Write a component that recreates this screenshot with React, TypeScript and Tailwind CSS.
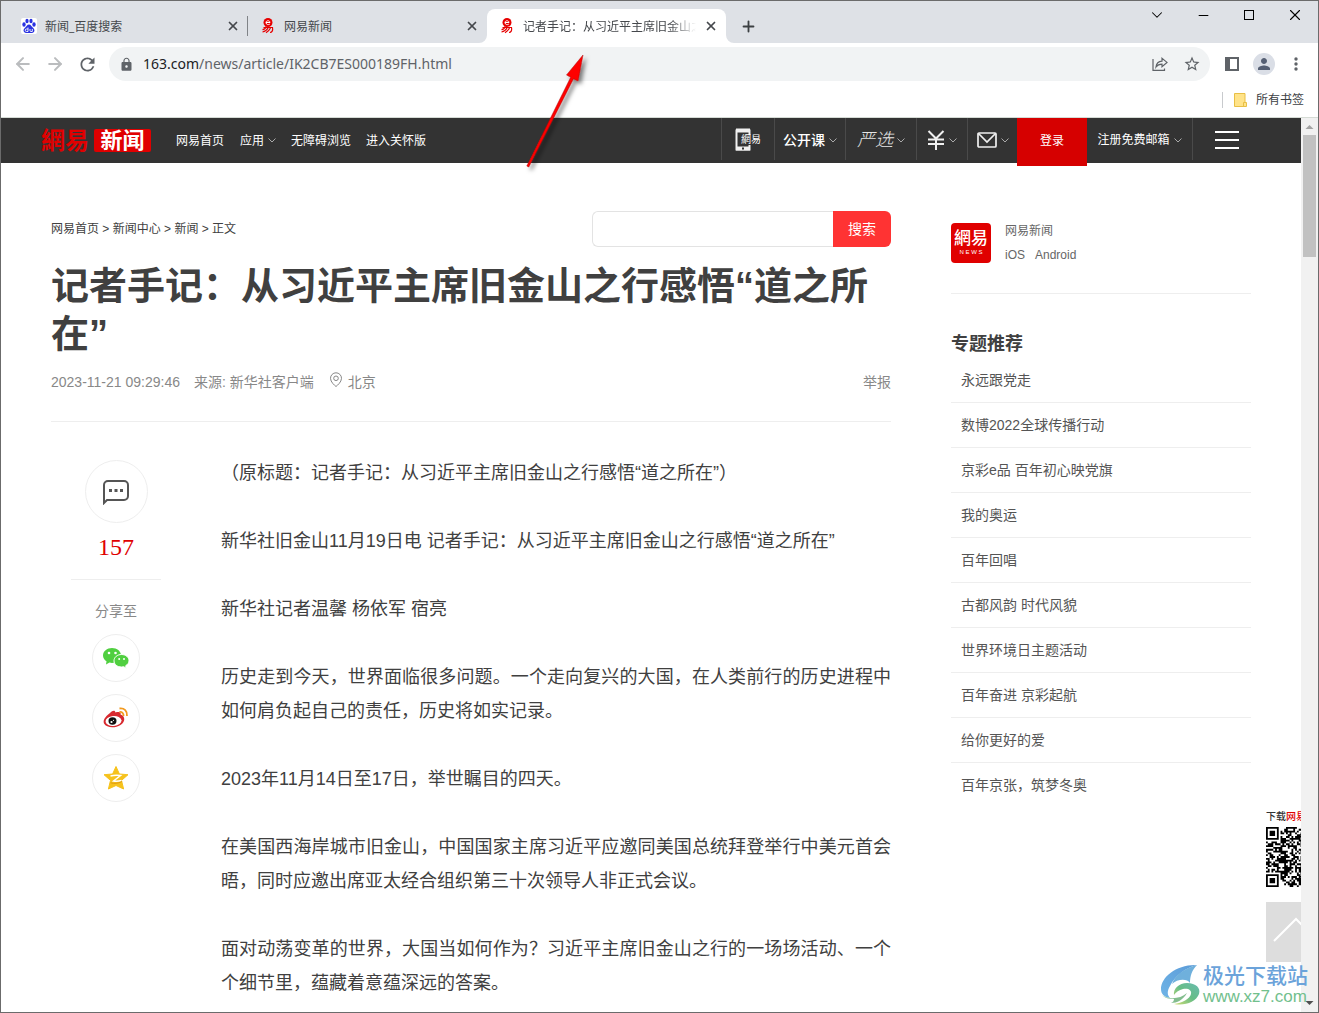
import type { ReactNode } from "react";
import {
  ArrowLeft,
  ArrowRight,
  ChevronDown,
  Minus,
  Plus,
  X,
} from "lucide-react";
import { MdLock, MdPerson, MdRefresh, MdStarBorder } from "react-icons/md";

const topics = [
  "永远跟党走",
  "数博2022全球传播行动",
  "京彩e品 百年初心映党旗",
  "我的奥运",
  "百年回唱",
  "古都风韵 时代风貌",
  "世界环境日主题活动",
  "百年奋进 京彩起航",
  "给你更好的爱",
  "百年京张，筑梦冬奥",
];

const paragraphs = [
  "（原标题：记者手记：从习近平主席旧金山之行感悟“道之所在”）",
  "新华社旧金山11月19日电 记者手记：从习近平主席旧金山之行感悟“道之所在”",
  "新华社记者温馨 杨依军 宿亮",
  "历史走到今天，世界面临很多问题。一个走向复兴的大国，在人类前行的历史进程中如何肩负起自己的责任，历史将如实记录。",
  "2023年11月14日至17日，举世瞩目的四天。",
  "在美国西海岸城市旧金山，中国国家主席习近平应邀同美国总统拜登举行中美元首会晤，同时应邀出席亚太经合组织第三十次领导人非正式会议。",
  "面对动荡变革的世界，大国当如何作为？习近平主席旧金山之行的一场场活动、一个个细节里，蕴藏着意蕴深远的答案。",
];

const BaiduIcon = () => (
  <svg width="16" height="16" viewBox="0 0 16 16" fill="#2932e1" className="shrink-0">
    <rect width="16" height="16" rx="2" fill="#fff" />
    <ellipse cx="3" cy="6.500" rx="1.700" ry="2.200" />
    <ellipse cx="6" cy="3" rx="1.600" ry="2.200" />
    <ellipse cx="10" cy="3" rx="1.600" ry="2.200" />
    <ellipse cx="13" cy="6.500" rx="1.700" ry="2.200" />
    <path d="M8 6.500c2 0 2.500 2 4 3.200 1.500 1.300 1.700 2.600 1.200 3.800-.8 1.800-2.700 1.500-5.200 1.500s-4.400.3-5.200-1.500c-.5-1.200-.3-2.500 1.200-3.800C5.500 8.500 6 6.500 8 6.500z" />
    <path d="M7 9.500v4H5.500a1.200 1.200 0 0 1 0-2.500H7M9 11v1.500c0 .7.300 1 1 1h1.300V11" fill="none" stroke="#fff" strokeWidth=".9" />
  </svg>
);

const NeteaseIcon = () => (
  <svg width="16" height="16" viewBox="0 0 16 16" fill="none" stroke="#e60000" className="shrink-0">
    <circle cx="8" cy="4.5" r="4.5" fill="#e60000" stroke="none" />
    <path d="M6 4.500h4c0-2.300-4-2.300-4 0 0 2.400 2.500 2.500 3.800 1.600" stroke="#fff" />
    <path d="M3.500 9.500h9c.6 3-.5 5-2.500 5M6 8.500c-.5 2-2 3-3.500 3.200M8 10c-1 2-3 3.500-5.500 4M10.500 10c-1 2-2.500 3.500-4.500 4.800" strokeWidth="1.2" />
  </svg>
);

type TabProps = { icon: ReactNode; title: string; active?: boolean; divider?: boolean };

const Tab = ({ icon, title, active, divider }: TabProps) => (
  <div
    className={`relative flex h-[34px] w-[239px] items-center pr-2 pl-3 ${
      active ? "rounded-t-lg bg-white" : ""
    }`}
  >
    {icon}
    <span
      className={`ml-2 flex-1 overflow-hidden pt-0.5 text-xs whitespace-nowrap text-[#45484c] ${
        active ? "[mask-image:linear-gradient(to_right,black_85%,transparent)]" : ""
      }`}
    >
      {title}
    </span>
    <button aria-label={`关闭 ${title}`} className="ml-2 text-[#45484c]">
      <X size={14} strokeWidth={3} />
    </button>
    {divider && <span className="absolute top-[7px] right-0 h-5 w-px bg-[#808387]" />}
    {active && (
      <>
        <svg width="8" height="8" className="absolute bottom-0 -left-2" fill="#fff">
          <path d="M8 0v8H0a8 8 0 0 0 8-8z" />
        </svg>
        <svg width="8" height="8" className="absolute -right-2 bottom-0" fill="#fff">
          <path d="M0 0v8h8a8 8 0 0 1-8-8z" />
        </svg>
      </>
    )}
  </div>
);

const TabStrip = () => (
  <div className="flex h-[42px] shrink-0 bg-[#dee1e6] pl-2">
    <div className="flex items-end">
      <Tab icon={<BaiduIcon />} title="新闻_百度搜索" divider />
      <Tab icon={<NeteaseIcon />} title="网易新闻" />
      <Tab icon={<NeteaseIcon />} title="记者手记：从习近平主席旧金山之" active />
      <button aria-label="新标签页" className="ml-3 flex h-[34px] w-5 items-center justify-center text-[#3c4043]">
        <Plus size={17} strokeWidth={2.6} />
      </button>
    </div>
    <div className="ml-auto flex h-7 text-black">
      <button aria-label="搜索标签页" className="flex w-[46px] items-center justify-center">
        <ChevronDown size={18} strokeWidth={1.4} />
      </button>
      <button aria-label="最小化" className="flex w-[46px] items-center justify-center">
        <Minus size={15} strokeWidth={1.8} />
      </button>
      <button aria-label="最大化" className="flex w-[46px] items-center justify-center">
        <svg width="10" height="10" fill="none" stroke="#000">
          <rect x=".5" y=".5" width="9" height="9" />
        </svg>
      </button>
      <button aria-label="关闭" className="flex w-[46px] items-center justify-center">
        <X size={18} strokeWidth={1.5} />
      </button>
    </div>
  </div>
);

const Toolbar = () => (
  <div className="flex shrink-0 items-center px-[6px] pt-1 pb-0.5 text-[#5f6368]">
    <button aria-label="后退" className="flex w-8 justify-center text-[#babcbe]">
      <ArrowLeft size={20} strokeWidth={2.4} />
    </button>
    <button aria-label="前进" className="flex w-8 justify-center text-[#babcbe]">
      <ArrowRight size={20} strokeWidth={2.4} />
    </button>
    <button aria-label="重新加载" className="flex w-8 justify-center">
      <MdRefresh size={21} />
    </button>
    <div className="mx-[6px] flex h-[34px] flex-1 items-center rounded-full bg-[#f1f3f4] pr-[9px] pl-[10px]">
      <MdLock size={15} />
      <p className="ml-[9px] flex-1 font-['Noto_Sans',sans-serif] text-sm">
        <span className="text-[#202124]">163.com</span>/news/article/IK2CB7ES000189FH.html
      </p>
      <button aria-label="分享" className="mr-[15px]">
        <svg width="16" height="16" viewBox="0 0 16 16" fill="none" stroke="#5f6368" strokeWidth="1.2">
          <path d="M1 3v11.400h11.500v-2" />
          <path d="M4 11c.4-4 2.600-5.700 6-5.900V2.200l5 4.200-5 4.200V8.200c-2.600 0-4.500.7-6 2.800z" />
        </svg>
      </button>
      <button aria-label="为此标签页添加书签">
        <MdStarBorder size={18} />
      </button>
    </div>
    <button aria-label="侧边栏" className="flex w-8 justify-center">
      <svg width="14" height="14" fill="none" stroke="#5f6368" strokeWidth="2">
        <rect x="1" y="1" width="12" height="12" />
        <path d="M3 1v12" strokeWidth="4" />
      </svg>
    </button>
    <button aria-label="个人资料" className="flex w-8 justify-center text-[#566074]">
      <span className="flex size-[22px] items-center justify-center rounded-full bg-[#dadee6]">
        <MdPerson size={18} />
      </span>
    </button>
    <button aria-label="更多" className="flex w-8 justify-center">
      <svg width="4" height="14" fill="#5f6368">
        <circle cx="2" cy="2" r="1.700" />
        <circle cx="2" cy="7" r="1.700" />
        <circle cx="2" cy="12" r="1.700" />
      </svg>
    </button>
  </div>
);

const BookmarksBar = () => (
  <div className="flex h-[35px] shrink-0 items-center justify-end border-b border-[#d5dbd5] pr-[14px]">
    <span className="h-4 w-px bg-[#c8cacd]" />
    <button className="ml-[11px] flex items-center gap-[9px] text-xs text-[#3c4043]">
      <svg width="13" height="14" fill="#ffe389" stroke="#e8bf45">
        <path d="M.5.500h10.500v9h1.500v4H.5z" />
        <path d="M9.500 13.500v-4H11" />
      </svg>
      所有书签
    </button>
  </div>
);

const Caret = () => (
  <svg width="8" height="5" fill="none" stroke="#aaa" className="shrink-0">
    <path d="M.5.500l3.500 3.500L7.500.500" />
  </svg>
);

const cell = "flex h-[42px] items-center justify-center gap-1 border-l border-[#4a4a4a] pt-0.5";

const SiteHeader = () => (
  <header className="h-[45px] bg-[#333] text-white">
    <div className="mx-auto flex max-w-[1220px] items-start">
      <a href="#" className="flex h-[45px] items-center font-bold">
        <span className="w-[53px] text-2xl text-[#e00000]">網易</span>
        <span className="flex h-[23px] w-[57px] items-center justify-center rounded-xs bg-[#e00000] text-[22px]">
          新闻
        </span>
      </a>
      <nav className="ml-[25px] flex h-[45px] items-center text-xs">
        <a href="#">网易首页</a>
        <a href="#" className="ml-4 flex items-center gap-1">
          应用
          <Caret />
        </a>
        <a href="#" className="ml-[15px]">无障碍浏览</a>
        <a href="#" className="ml-[15px]">进入关怀版</a>
      </nav>
      <div className="ml-auto flex text-xs">
        <a href="#" className={`${cell} w-[53px]`}>
          <svg width="16" height="24" fill="none" stroke="#f0f0f0" className="shrink-0">
            <path d="M14.500 7V2.500h-13v19h13V17" strokeWidth="2" />
            <path d="M1 2.500h14M1 20.500h14" strokeWidth="4" />
            <path d="M7 20.500h2" stroke="#333" strokeWidth="2" />
          </svg>
          <span className="-ml-[14px] text-[10px]">網易</span>
        </a>
        <a href="#" className={`${cell} w-[71px] text-sm font-medium`}>
          公开课
          <Caret />
        </a>
        <a href="#" className={`${cell} w-[71px] text-lg font-light text-[#e5e5e5] italic`}>
          严选
          <Caret />
        </a>
        <a href="#" aria-label="支付" className={`${cell} w-[51px]`}>
          <svg width="18" height="20" fill="none" stroke="#f0f0f0" strokeWidth="2">
            <path d="M1.500 1L9 8.500 16.500 1M1 9.500h16M1 14h16M9 9v11" />
          </svg>
          <Caret />
        </a>
        <a href="#" aria-label="邮箱" className={`${cell} w-[50px]`}>
          <svg width="20" height="16" fill="none" stroke="#f0f0f0" strokeWidth="1.700">
            <rect x="1" y="1" width="18" height="14" rx="1" />
            <path d="M1.500 1.500L10 10l8.500-8.500" />
          </svg>
          <Caret />
        </a>
        <a href="#" className="flex h-12 w-[70px] items-center justify-center bg-[#d60000] pb-[3px]">
          登录
        </a>
        <a href="#" className="flex h-[42px] w-[105px] items-center justify-center gap-1 pt-0.5">
          注册免费邮箱
          <Caret />
        </a>
        <button aria-label="菜单" className={`${cell} w-[69px]`}>
          <svg width="24" height="18" stroke="#fff" strokeWidth="2">
            <path d="M0 1h24M0 9h24M0 17h24" />
          </svg>
        </button>
      </div>
    </div>
  </header>
);

const WechatIcon = () => (
  <svg width="26" height="22" viewBox="0 0 26 22" fill="#50cf40">
    <path d="M9 1C4 1 0 4.300 0 8.400c0 2.500 1.400 4.500 3.500 5.900L3 17.500l3.500-1.900c.9.200 1.700.3 2.500.3 5 0 9-3.300 9-7.500S14 1 9 1z" />
    <path d="M18.500 7.500c-4.200 0-7.500 2.700-7.500 6.300s3.300 6.200 7.500 6.200c.7 0 1.500-.1 2.200-.3l2.500 1.500-.5-2.500c2-1.100 3.300-2.900 3.300-4.900 0-3.600-3.300-6.300-7.500-6.300z" stroke="#fff" />
    <g fill="#fff">
      <circle cx="6" cy="6" r="1.300" />
      <circle cx="12.500" cy="6" r="1.300" />
      <circle cx="16.200" cy="12" r="1" />
      <circle cx="21" cy="12" r="1" />
    </g>
  </svg>
);

const WeiboIcon = () => (
  <svg width="26" height="22" viewBox="0 0 26 22">
    <path d="M7 6c2.500-2.500 5-3 5.500-.5 3-1 6-.5 5 2 5 1.500 5 7.500 0 10.500-5.500 3.500-14 3-16.500-1.500C-.5 13 3 9 7 6z" fill="#d8292f" />
    <ellipse cx="10.500" cy="14" rx="8" ry="5" fill="#fff" transform="rotate(-6 10.500 14)" />
    <ellipse cx="9.500" cy="14" rx="4" ry="3.700" fill="#111" />
    <circle cx="8.500" cy="15" r="1.100" fill="#fff" />
    <circle cx="10.500" cy="13.300" r=".6" fill="#fff" />
    <path d="M16.500 1.500c4.800-.7 8 2.500 7.500 7.500M16.500 5c2.500-.3 4.300 1.300 4 4" fill="none" stroke="#f29a1f" strokeWidth="1.800" />
  </svg>
);

const QzoneIcon = () => (
  <svg width="24" height="24" viewBox="0 0 24 24">
    <path d="M12 .5l3.400 7.500 8.600.7-6.500 5.700 2.100 8.600L12 19.500 4.400 23l2.100-8.600L0 8.700 8.600 8z" fill="#f6c21c" stroke="#f6c21c" strokeLinejoin="round" />
    <path d="M6.500 10c3.500-.8 6.500-.8 10-.4L9.500 15c2.500.5 4.500.5 8-.5" fill="none" stroke="#fff" strokeWidth="1.500" />
    <path d="M6.500 16.800c4 1 7 .8 11.500-1.300" fill="none" stroke="#df9a13" />
  </svg>
);

const shares = [
  { name: "微信", icon: <WechatIcon /> },
  { name: "微博", icon: <WeiboIcon /> },
  { name: "QQ空间", icon: <QzoneIcon /> },
];

const ShareColumn = () => (
  <div className="mt-[38px] mr-[60px] ml-5 flex w-[90px] shrink-0 flex-col items-center">
    <a
      href="#"
      aria-label="评论"
      className="flex size-[63px] items-center justify-center rounded-full border border-[#eee]"
    >
      <svg width="28" height="26" viewBox="0 0 28 26" fill="none" stroke="#555" strokeWidth="2">
        <path d="M2 24V6a4 4 0 0 1 4-4h16a4 4 0 0 1 4 4v11a4 4 0 0 1-4 4H5z" />
        <path d="M7 11.500h3M12.500 11.500h3M18 11.500h3" strokeWidth="3" />
      </svg>
    </a>
    <a
      href="#"
      className="flex h-[57px] w-full justify-center border-b border-[#eee] pt-2 font-['Liberation_Serif',serif] text-2xl text-[#e00000]"
    >
      157
    </a>
    <p className="mt-[21px] mb-[13px] text-sm text-[#888]">分享至</p>
    <div className="flex flex-col gap-3">
      {shares.map((share) => (
        <a
          key={share.name}
          href="#"
          aria-label={share.name}
          className="flex size-12 items-center justify-center rounded-full border border-[#eee]"
        >
          {share.icon}
        </a>
      ))}
    </div>
  </div>
);

const Article = () => (
  <main className="max-w-[840px] flex-1 pt-12 text-[#404040]">
    <div className="flex h-9 items-center justify-between">
      <nav className="text-xs">
        <a href="#">网易首页</a> &gt; <a href="#">新闻中心</a> &gt; <a href="#">新闻</a> &gt; 正文
      </nav>
      <form className="flex h-9 w-[299px]">
        <input
          type="text"
          aria-label="搜索"
          className="min-w-0 flex-1 rounded-l-md border border-r-0 border-[#e3e3e3] px-3 text-sm outline-none"
        />
        <button type="button" className="w-[58px] rounded-r-md bg-[#ff3333] text-sm text-white">
          搜索
        </button>
      </form>
    </div>
    <h1 className="mt-[15px] text-[38px] leading-[48px] font-bold">
      记者手记：从习近平主席旧金山之行感悟“道之所在”
    </h1>
    <div className="mt-[14px] flex items-center border-b border-[#eee] pb-[29px] text-sm text-[#888]">
      <span>2023-11-21 09:29:46</span>
      <span className="ml-[14px]">来源: 新华社客户端</span>
      <svg width="14" height="16" fill="none" stroke="#888" className="mr-[5px] mb-1 ml-[15px]">
        <path d="M7 14.500c-1.500-1.200-5.500-4.500-5.500-8.200a5.500 5.500 0 0 1 11 0c0 3.700-4 7-5.500 8.200z" />
        <circle cx="7" cy="6.300" r="2.300" />
      </svg>
      <span>北京</span>
      <a href="#" className="ml-auto">举报</a>
    </div>
    <div className="flex">
      <ShareColumn />
      <div className="mt-[34px] flex flex-1 flex-col gap-[34px] text-justify text-lg leading-[34px]">
        {paragraphs.map((text) => (
          <p key={text}>{text}</p>
        ))}
      </div>
    </div>
  </main>
);

const Sidebar = () => (
  <aside className="w-[300px] shrink-0 pt-[60px]">
    <div className="flex gap-[14px] border-b border-[#eee] pb-[30px] text-xs text-[#666]">
      <div className="flex size-10 flex-col items-center justify-center rounded-sm bg-[#e00000] text-white">
        <span className="text-[17px] leading-[18px] font-medium">網易</span>
        <span className="text-[6px] leading-[8px]">N E W S</span>
      </div>
      <div className="-my-1 leading-6">
        <p>网易新闻</p>
        <a href="#">iOS</a>
        <a href="#" className="ml-[10px]">Android</a>
      </div>
    </div>
    <h2 className="mt-[38px] mb-0.5 text-lg leading-6 font-bold text-[#404040]">专题推荐</h2>
    <ul className="text-sm text-[#555]">
      {topics.map((topic) => (
        <li
          key={topic}
          className="flex h-[45px] items-center border-b border-[#eee] px-[10px] last:border-transparent"
        >
          <a href="#">{topic}</a>
        </li>
      ))}
    </ul>
  </aside>
);

const QR_SIZE = 33;

const isFinder = (x: number, y: number) => {
  const near = (a: number) => (a < 8 ? a : a > QR_SIZE - 9 ? QR_SIZE - 1 - a : -1);
  const fx = near(x);
  const fy = near(y);
  if (fx < 0 || fy < 0 || (x > 24 && y > 24)) return null;
  const ring = Math.max(Math.abs(fx - 3), Math.abs(fy - 3));
  return ring !== 2 && ring < 4;
};

const QrCode = () => {
  let d = "";
  for (let y = 0; y < QR_SIZE; y++) {
    for (let x = 0; x < QR_SIZE; x++) {
      const finder = isFinder(x, y);
      const data = ((x * 7 + y * 13 + ((x * y * 5) ^ (x * 3 + y * 11))) * 2654435) % 97 < 54;
      if (finder ?? data) d += `M${x} ${y}h1v1h-1z`;
    }
  }
  return (
    <svg width="60" height="60" viewBox={`0 0 ${QR_SIZE} ${QR_SIZE}`}>
      <path d={d} />
    </svg>
  );
};

const FloatingTools = () => (
  <div className="absolute -right-[25px] bottom-[50px] w-[60px]">
    <p className="mb-1 text-[10px] leading-3 font-medium whitespace-nowrap text-[#333]">
      下载<span className="text-[#e00000]">网易新闻</span>
    </p>
    <QrCode />
    <button aria-label="返回顶部" className="mt-[15px] block size-[60px] bg-[#ddd]">
      <svg width="60" height="60" fill="none" stroke="#fff" strokeWidth="2">
        <path d="M8 39l22-22 22 22" />
      </svg>
    </button>
  </div>
);

const Scrollbar = () => (
  <div className="flex w-[17px] shrink-0 flex-col items-center bg-[#f1f1f1]">
    <svg width="17" height="17" fill="#a3a3a3">
      <path d="M4.500 11l4-4 4 4z" />
    </svg>
    <div className="h-[122px] w-[13px] bg-[#c1c1c1]" />
    <svg width="17" height="17" fill="#505050" className="mt-auto">
      <path d="M4.500 6l4 4 4-4z" />
    </svg>
  </div>
);

const PointerArrow = () => (
  <svg width="80" height="130" className="pointer-events-none absolute top-[45px] left-[515px]">
    <defs>
      <filter id="arrow-shadow" x="-20%" y="-20%" width="150%" height="150%">
        <feDropShadow dx="3" dy="3" stdDeviation="2" floodColor="#000" floodOpacity=".5" />
      </filter>
    </defs>
    <g fill="#fe0000" stroke="#b01010" strokeWidth=".5" filter="url(#arrow-shadow)">
      <path d="M67 9l-5 26-4.500-2.300L12.800 121l-2-1L54.700 31.200 50.500 29z" />
    </g>
  </svg>
);

const Watermark = () => (
  <div className="pointer-events-none absolute right-[10px] bottom-[5px] flex items-center">
    <svg width="43" height="42" viewBox="0 0 43 42">
      <defs>
        <linearGradient id="swoosh-blue" x1="0" y1="1" x2="1" y2="0">
          <stop offset="0" stopColor="#6fb4e6" />
          <stop offset="1" stopColor="#5b9bd8" />
        </linearGradient>
        <linearGradient id="swoosh-green" x1="0" y1="1" x2="1" y2="0">
          <stop offset="0" stopColor="#d2dd72" />
          <stop offset=".5" stopColor="#66bd86" />
          <stop offset="1" stopColor="#69bbb0" />
        </linearGradient>
      </defs>
      <path d="M37 1C17 0 1 13 1 25c0 5 3 8 9 9-3-3-3-7 0-12C15 12 25 4 37 1z" fill="url(#swoosh-blue)" />
      <path d="M37 1C25 4 15 11 12 20c5-5 15-6 18-1 0-7 2-13 7-18z" fill="#6fb0dc" />
      <path d="M14 31c-1-6 5-12 13-12 9 0 14 5 12 11-3 8-14 12-25 10 8-1 16-5 17-10 1-4-3-6-8-5-4 1-7 3-9 6z" fill="url(#swoosh-green)" />
      <path d="M2 31c7 5 18 4 25-2-4 7-10 10-16 10 2-1 3-2 3-4-5 0-9-1-12-4z" fill="#83bd8e" />
    </svg>
    <div className="font-medium whitespace-nowrap">
      <p className="text-[21px] leading-6 text-[#6ba3da]">极光下载站</p>
      <p className="font-['Liberation_Sans',sans-serif] text-[17px] leading-5 text-[#72c08d]">www.xz7.com</p>
    </div>
  </div>
);

const App = () => {
  return (
    <div className="relative flex h-screen flex-col overflow-hidden border border-[#6b6b6b] bg-white font-['Open_Sans','Noto_Sans_CJK_SC',sans-serif]">
      <TabStrip />
      <Toolbar />
      <BookmarksBar />
      <div className="flex min-h-0 flex-1 font-['Liberation_Sans','Noto_Sans_CJK_SC',sans-serif]">
        <div className="relative min-w-0 flex-1 overflow-hidden">
          <SiteHeader />
          <div className="mx-auto flex max-w-[1200px] justify-between gap-[60px]">
            <Article />
            <Sidebar />
          </div>
          <FloatingTools />
        </div>
        <Scrollbar />
      </div>
      <PointerArrow />
      <Watermark />
    </div>
  );
};

export default App;
